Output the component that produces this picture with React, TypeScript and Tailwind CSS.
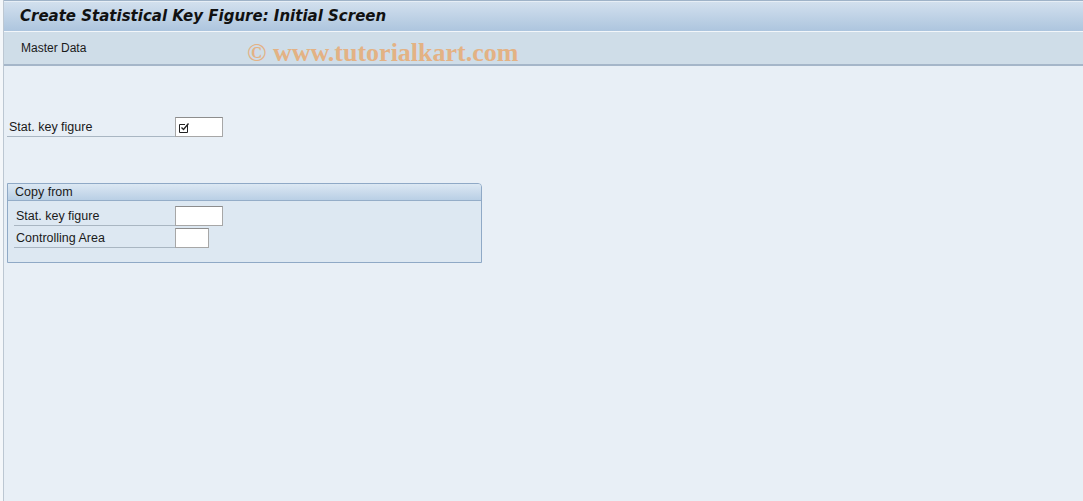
import React from "react";

function CheckIcon() {
  return (
    <svg width="12" height="11" viewBox="0 0 12 11" className="block">
      <path d="M8.5 3 V10.5 H0.5 V2.5 H6" fill="none" stroke="#222" strokeWidth="1" />
      <path d="M2.5 5.5 L4.5 7.5 L9.5 1.5" fill="none" stroke="#222" strokeWidth="1.3" />
    </svg>
  );
}

function Field({ label, inputW, icon, labelW }: { label: string; inputW: string; icon?: boolean; labelW: string }) {
  return (
    <div className="flex items-end h-[22px]">
      <div className={`${labelW} h-[20px] border-b border-[#a9b6c2] flex items-center pt-[2px] text-[12.5px] text-[#1a1a1a] pl-[2px]`}>
        {label}
      </div>
      <div className={`${inputW} h-[20px] bg-white border border-[#a7a7a7] border-t-[#8d8d8d] flex items-center pl-[3px]`}>
        {icon ? <CheckIcon /> : null}
      </div>
    </div>
  );
}

export default function App() {
  return (
    <div
      className="w-[1083px] h-[501px] bg-[#f5f8fb] overflow-hidden flex"
      style={{ fontFamily: "'DejaVu Sans', 'Liberation Sans', sans-serif" }}
    >
      <div className="w-[3px] bg-[#f4f7fa]" />
      <div className="w-[1px] bg-[#bcc7d2]" />
      <div className="flex-1 flex flex-col bg-[#e8eff6]">
        <div className="h-[1px] bg-[#9fb3c8]" />
        <div className="h-[1px] bg-[#e6eef6]" />
        <div className="h-[29px] bg-gradient-to-b from-[#d2e0ee] to-[#adc5de] flex items-center pl-[16px]">
          <span className="text-[15px] font-bold italic text-[#111]" style={{ fontFamily: "'DejaVu Sans', sans-serif" }}>
            Create Statistical Key Figure: Initial Screen
          </span>
        </div>
        <div className="h-[1px] bg-[#f2f6fa]" />
        <div className="h-[32px] bg-[#cfdde8] flex items-center relative">
          <span className="pl-[17px] text-[12px] text-[#1a1a1a]" style={{ fontFamily: "'Liberation Sans', sans-serif" }}>Master Data</span>
          <span
            className="absolute left-[243px] top-[1px] text-[26px] font-bold text-[#e9a86c] opacity-80"
            style={{ fontFamily: "'Liberation Serif', serif" }}
          >
            © www.tutorialkart.com
          </span>
        </div>
        <div className="h-[2px] bg-[#a5b6c9]" />
        <div className="flex flex-col pl-[3px] pt-[49px]" style={{ fontFamily: "'Liberation Sans', sans-serif" }}>
          <Field label="Stat. key figure" labelW="w-[168px]" inputW="w-[48px]" icon />
          <div className="mt-[46px] w-[475px] h-[80px] border border-[#8fa9c6] rounded-tr-[4px] flex flex-col bg-[#dde8f2]">
            <div className="h-[17px] bg-gradient-to-b from-[#dce8f3] to-[#b9cfe5] border-b border-[#94adc8] flex items-center pl-[7px] text-[12.5px] text-[#1a1a1a] rounded-tr-[3px]">
              Copy from
            </div>
            <div className="flex flex-col pl-[6px] pt-[3px] gap-[0px]">
              <Field label="Stat. key figure" labelW="w-[161px]" inputW="w-[48px]" />
              <Field label="Controlling Area" labelW="w-[161px]" inputW="w-[34px]" />
            </div>
          </div>
        </div>
      </div>
    </div>
  );
}
